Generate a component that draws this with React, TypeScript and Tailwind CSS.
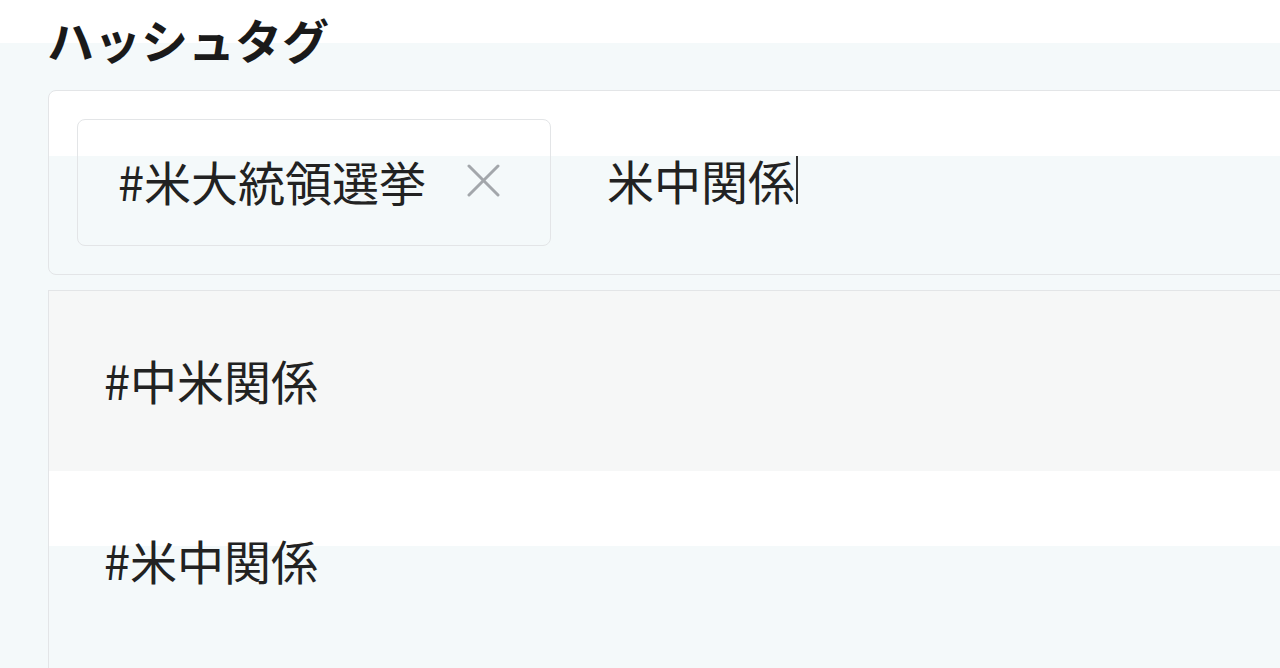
import { useState } from "react";

const tags = ["#中米関係", "#米中関係"];

/**
 * Close icon for a chosen tag
 */
const CloseIcon = (): JSX.Element => (
  <svg width="33" height="33" viewBox="0 0 33 33" fill="none" stroke="#a3a7ab" strokeWidth="3" strokeLinecap="round">
    <path d="M2 2 L31 31" />
    <path d="M31 2 L2 31" />
  </svg>
);

/**
 * Hashtag picker
 *
 * @returns App component
 */
const App = (): JSX.Element => {
  const [ query ] = useState("米中関係");

  return (
    <div className="h-[668px] flex flex-col overflow-hidden bg-[linear-gradient(to_bottom,#ffffff_43px,#f4f9fa_43px)] font-['Noto_Sans_CJK_JP',sans-serif] text-[#222222]">
      {/* Heading */}
      <h2 className="pl-[47px] pt-[15px] text-[47px] leading-none font-bold text-[#1a1a1a]">
        ハッシュタグ
      </h2>

      {/* Input with chosen tags */}
      <div className="shrink-0 ml-[48px] mr-[-20px] mt-[28px] h-[185px] flex items-center gap-[56px] px-[28px] border border-[#e3e5e7] rounded-lg bg-[linear-gradient(to_bottom,#ffffff_65px,#f4f9fa_65px)]">
        <div className="w-[474px] h-[127px] flex items-center pl-[40px] pb-[4px] gap-[41px] border border-[#e3e5e7] rounded-lg bg-[linear-gradient(to_bottom,#ffffff_36px,#f4f9fa_36px)]">
          <span className="text-[47px] leading-none">#米大統領選挙</span>
          <CloseIcon />
        </div>

        <div className="flex items-center pb-[6px]">
          <span className="text-[47px] leading-none">{query}</span>
          <span className="ml-[1px] w-[2px] h-[48px] bg-[#333333]" />
        </div>
      </div>

      {/* Suggestions */}
      <ul className="flex-1 ml-[48px] mt-[15px] border-t border-l border-[#e3e5e7]">
        {tags.map((tag, i) => (
          <li
            key={tag}
            className={
              i === 0
                ? "h-[180px] flex items-center pl-[55px] pb-[4px] bg-[#f6f7f7]"
                : "h-[180px] flex items-center pl-[55px] pb-[4px] bg-[linear-gradient(to_bottom,#ffffff_75px,#f4f9fa_75px)]"
            }
          >
            <span className="text-[47px] leading-none">{tag}</span>
          </li>
        ))}
      </ul>
    </div>
  );
};

export default App;
